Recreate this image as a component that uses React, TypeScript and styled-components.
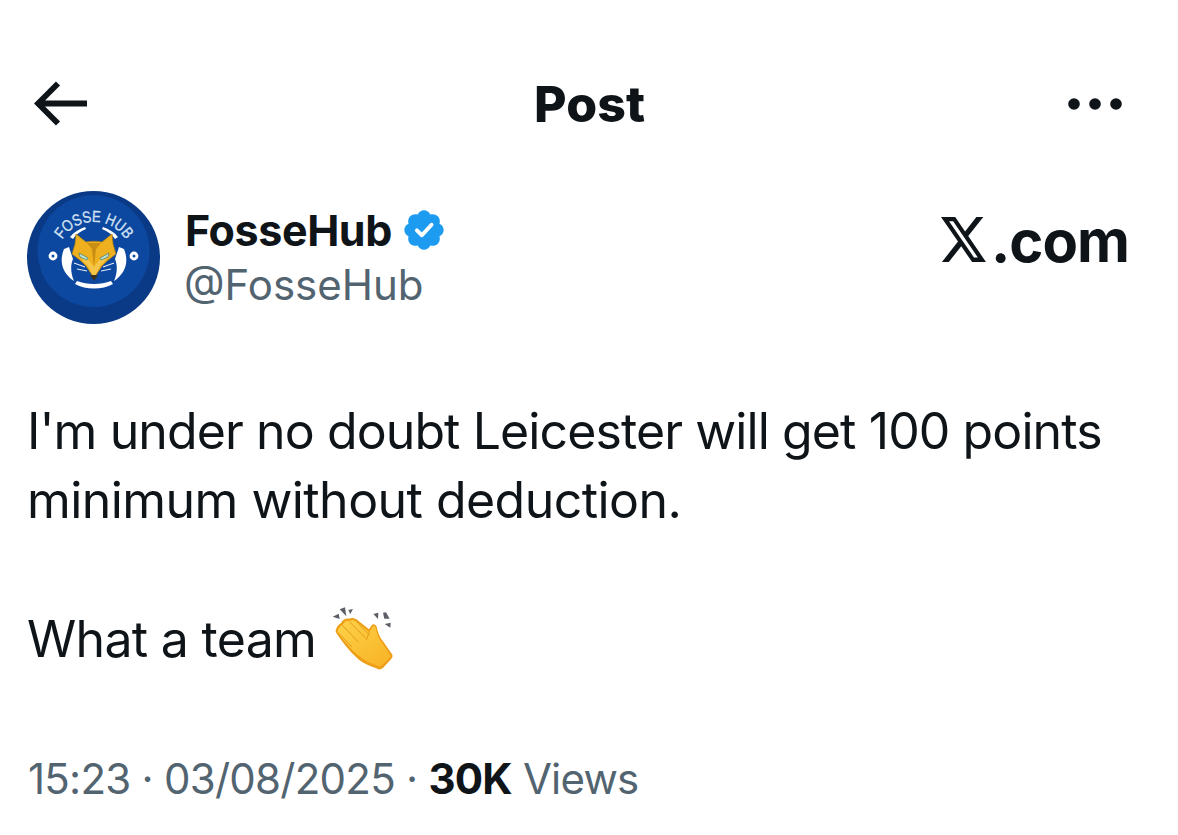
import React from "react";
import styled, { createGlobalStyle } from "styled-components";

const Global = createGlobalStyle`
  html, body { margin: 0; padding: 0; background: #fff; }
  body { font-family: Inter, "Liberation Sans", sans-serif; color: #0f1419; overflow: hidden; }
`;

const Page = styled.div`
  width: 1178px;
  height: 835px;
  padding: 72px 0 0 0;
  box-sizing: border-box;
  overflow: hidden;
  background: #fff;
`;

const Header = styled.header`
  display: grid;
  grid-template-columns: 500px auto 1fr;
  align-items: center;
  height: 64px;
  padding: 0 55px 0 34px;
`;

const Title = styled.h1`
  margin: 0;
  font-size: 50px;
  line-height: 64px;
  font-weight: 800;
  letter-spacing: 0.1px;
`;

const IconCell = styled.div<{ $end?: boolean }>`
  display: flex;
  justify-content: ${(p) => (p.$end ? "flex-end" : "flex-start")};
  align-items: center;
`;

const AuthorRow = styled.section`
  display: flex;
  align-items: flex-start;
  margin-top: 55px;
  padding: 0 49px 0 27px;
`;

const Avatar = styled.svg`
  width: 133px;
  height: 133px;
  flex: none;
`;

const Names = styled.div`
  display: flex;
  flex-direction: column;
  margin-left: 25px;
  padding-top: 11px;
`;

const NameLine = styled.div`
  display: flex;
  align-items: center;
  gap: 9px;
  height: 56px;
`;

const Name = styled.span`
  font-size: 43px;
  font-weight: 700;
  letter-spacing: -0.4px;
`;

const Handle = styled.span`
  font-size: 42px;
  line-height: 54px;
  color: #536471;
  margin-left: -1px;
`;

const Brand = styled.div`
  margin-left: auto;
  display: flex;
  align-items: baseline;
  padding-top: 12px;
  font-size: 58px;
  line-height: 76px;
  font-weight: 700;
  letter-spacing: -1px;
`;

const BrandMark = styled.svg`
  width: 45px;
  height: 45px;
  margin-right: 5px;
`;

const Body = styled.div`
  margin-top: 73px;
  padding: 0 27px;
  font-size: 50px;
  line-height: 69px;
  font-weight: 400;
`;

const Line = styled.div<{ $tracking: number }>`
  display: flex;
  align-items: center;
  letter-spacing: ${(p) => p.$tracking}px;
`;

const Gap = styled.div`
  height: 69px;
`;

const Clap = styled.svg`
  width: 64px;
  height: 70px;
  margin-left: 15px;
`;

const Meta = styled.footer`
  margin-top: 78px;
  padding: 0 28px;
  font-size: 42px;
  line-height: 54px;
  color: #536471;
  letter-spacing: -0.75px;
`;

const Strong = styled.strong`
  color: #0f1419;
  font-weight: 700;
`;

const BadgeLabel = styled.text`
  font-family: "Liberation Sans", sans-serif;
  font-size: 16px;
  fill: #d5e2f4;
  stroke: #d5e2f4;
  stroke-width: 0.3px;
`;

const Verified = () => (
  <svg width="46" height="46" viewBox="0 0 22 22">
    <path
      fill="#1d9bf0"
      d="M20.4 11c0-1.3-.8-2.5-2-3 .4-1.3.1-2.7-.8-3.6-.9-.9-2.3-1.2-3.6-.8-.5-1.2-1.7-2-3-2s-2.5.8-3 2c-1.3-.4-2.7-.1-3.6.8-.9.9-1.2 2.3-.8 3.6-1.2.5-2 1.7-2 3s.8 2.5 2 3c-.4 1.3-.1 2.7.8 3.6.9.9 2.3 1.2 3.6.8.5 1.2 1.7 2 3 2s2.5-.8 3-2c1.3.4 2.7.1 3.6-.8.9-.9 1.2-2.3.8-3.6 1.2-.5 2-1.7 2-3z"
    />
    <path fill="none" stroke="#fff" strokeWidth="1.9" strokeLinecap="round" strokeLinejoin="round" d="M7.6 11.2l2.4 2.3 4.6-5" />
  </svg>
);

const Flower = ({ x, y }: { x: number; y: number }) => (
  <g>
    <circle cx={x} cy={y} r="4.4" fill="#fff" />
    <circle cx={x} cy={y} r="1.5" fill="#0d4ba6" />
  </g>
);

const App = () => (
  <Page>
    <Global />
    <Header>
      <IconCell>
        <svg width="54" height="46" viewBox="0 0 54 46">
          <path d="M53 22.5H6M24 2.500L4 22.5l20 20" fill="none" stroke="#0f1419" strokeWidth="5.8" />
        </svg>
      </IconCell>
      <Title>Post</Title>
      <IconCell $end>
        <svg width="56" height="14" viewBox="0 0 56 14">
          <circle cx="7" cy="7" r="5.8" fill="#0f1419" />
          <circle cx="28" cy="7" r="5.8" fill="#0f1419" />
          <circle cx="49" cy="7" r="5.8" fill="#0f1419" />
        </svg>
      </IconCell>
    </Header>

    <AuthorRow>
      <Avatar viewBox="0 0 133 133">
        <circle cx="66.5" cy="66.5" r="66.5" fill="#0a3a85" />
        <circle cx="66.5" cy="60" r="56" fill="#0c48a0" />
        <defs>
          <path id="arc" d="M29.500 68.500A37.500 37.500 0 0 1 104.500 68.500" />
        </defs>
        <BadgeLabel>
          <textPath href="#arc" startOffset="50%" textAnchor="middle" textLength="76" lengthAdjust="spacingAndGlyphs">FOSSE HUB</textPath>
        </BadgeLabel>
        <path d="M37 58c-5 12-2 24 10 32-3-7-4-15-1-22l-4-12z" fill="#fff" />
        <path d="M97 58c5 12 2 24-10 32 3-7 4-15 1-22l4-12z" fill="#fff" />
        <path d="M50 90c10 4 24 4 34 0l2 3c-11 6-27 6-38 0z" fill="#fff" />
        <path d="M43 46c4-5 9-8 15-10l1 2c-5 2-10 5-13 10zM91 46c-4-5-9-8-15-10l-1 2c5 2 10 5 13 10z" fill="#fff" />
        <path d="M49 43l10 8c5-1 11-1 16 0l10-8 1 10 3 10-9 7-5 5-8 12-8-12-5-5-9-7 3-10z" fill="#efb020" stroke="#a97d12" strokeWidth="0.7" />
        <path d="M60 52h14l-5 6-2 18-2-18z" fill="#c98e14" />
        <path d="M67 76l6-8 8-5-3 7-5 5-6 12-6-12-5-5-3-7 8 5z" fill="#f5c54a" />
        <path d="M52 62l9 5-1 2-7-3zM82 62l-9 5 1 2 7-3z" fill="#bfe3d2" stroke="#3d7a73" strokeWidth="0.7" />
        <path d="M63 84h8l-4 6z" fill="#3a3322" />
        <path d="M47 72l11 4M50 78l10 2M87 72l-11 4M84 78l-10 2" stroke="#dfe9f7" strokeWidth="1.2" fill="none" />
        <Flower x={26} y={65} />
        <Flower x={107} y={65} />
      </Avatar>
      <Names>
        <NameLine>
          <Name>FosseHub</Name>
          <Verified />
        </NameLine>
        <Handle>@FosseHub</Handle>
      </Names>
      <Brand>
        <BrandMark viewBox="1.25 2.25 21.6 19.5" preserveAspectRatio="none">
          <path
            fill="#0f1419"
            d="M18.244 2.25h3.308l-7.227 8.26 8.502 11.24H16.17l-5.214-6.817L4.99 21.75H1.68l7.73-8.835L1.254 2.25H8.08l4.713 6.231zm-1.161 17.52h1.833L7.084 4.126H5.117z"
          />
        </BrandMark>
        .com
      </Brand>
    </AuthorRow>

    <Body>
      <Line $tracking={-0.9}>I'm under no doubt Leicester will get 100 points</Line>
      <Line $tracking={-0.55}>minimum without deduction.</Line>
      <Gap />
      <Line $tracking={-0.7}>
        What a team
        <Clap viewBox="0 0 192 210">
          <defs>
            <linearGradient id="skin" x1="0.1" y1="0" x2="0.9" y2="1">
              <stop offset="0" stopColor="#fdd048" />
              <stop offset="1" stopColor="#f8b426" />
            </linearGradient>
          </defs>
          <g fill="#5c6066">
            <path d="M5 38l18-9 3 16zM26 16l16-6 4 27zM52 18l14-3-8 15z" />
            <path d="M127 30l15-4-1 19zM156 26l9-1 11 19-16 0zM161 60l18-4-1 15z" />
          </g>
          <path
            d="M14 84C14 72 22 62 30 58C34 48 44 42 54 44C62 40 74 42 82 50L114 76L122 64C126 58 134 60 137 68C140 84 146 100 156 112L180 146C186 152 186 160 180 166L158 190C150 198 142 198 134 192C116 186 92 176 78 162C54 140 32 112 14 84Z"
            fill="#ee9f17"
          />
          <path
            d="M20 84C20 74 27 67 35 64C38 55 46 49 55 51C62 47 72 48 79 55L115 85L125 68C128 64 132 66 134 71C137 87 142 103 152 115L175 149C179 153 179 158 175 162L154 183C148 189 142 188 136 184C118 178 98 168 84 156C60 136 38 110 20 84Z"
            fill="url(#skin)"
          />
          <path
            d="M36 66l46 48M56 54l46 46M78 54l34 36M115 85l-9 22M24 88l38 40"
            fill="none"
            stroke="#e29a13"
            strokeWidth="2.8"
            strokeLinecap="round"
          />
        </Clap>
      </Line>
    </Body>

    <Meta>
      15:23 · 03/08/2025 · <Strong>30K</Strong> Views
    </Meta>
  </Page>
);

export default App;
